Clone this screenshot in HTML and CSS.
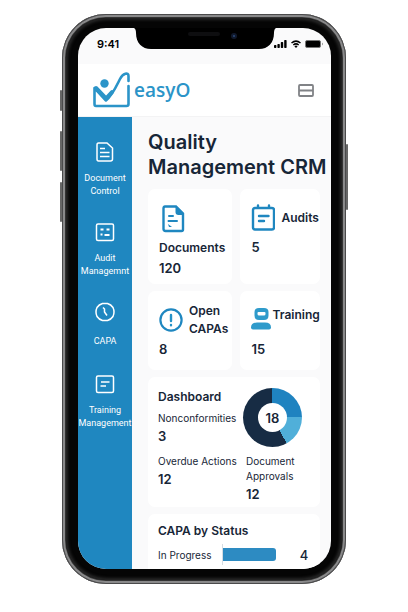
FILE: index.html
```html
<!DOCTYPE html>
<html lang="en">
<head>
<meta charset="utf-8">
<meta name="viewport" content="width=device-width, initial-scale=1">
<title>easyO Quality Management CRM</title>
<link rel="stylesheet" href="styles.css">
</head>
<body>
<div class="phone">
  <span class="key key-mute"></span>
  <span class="key key-up"></span>
  <span class="key key-down"></span>
  <span class="key key-power"></span>
  <div class="bezel">
  <div class="screen">
    <div class="notch">
      <svg viewBox="0 0 142 21" width="142" height="21" aria-hidden="true">
        <path d="M0 0H142Q140 1 140 5C140 15 134 21 125 21H17C8 21 2 15 2 5Q2 1 0 0Z" fill="#000"/>
        <rect x="54" y="4" width="32" height="4" rx="2" fill="#0e0e10"/>
        <circle cx="100" cy="8" r="3" fill="#10192c"/>
        <circle cx="100" cy="8" r="1" fill="#2b4a78"/>
      </svg>
    </div>
    <div class="status">
      <span class="time">9:41</span>
      <svg viewBox="0 0 50 10" width="50" height="10" aria-hidden="true">
        <g fill="#000"><rect x="0" y="6" width="2.400" height="3" rx=".7"/><rect x="3.400" y="5" width="2.400" height="4" rx=".7"/><rect x="6.800" y="3" width="2.400" height="6" rx=".7"/><rect x="10.200" y="1" width="2.400" height="8" rx=".7"/></g>
        <path d="M17.500 4Q22 .2 26.500 4M19.300 6Q22 3.700 24.700 6" fill="none" stroke="#000" stroke-width="1.500"/>
        <path d="M20.400 7.200Q22 6 23.600 7.200L22 9Z"/>
        <rect x="31.500" y="1.500" width="15" height="7" rx="1.500" fill="#000" stroke="#777" stroke-width="1"/>
        <path d="M48 3.500Q49.500 5 48 6.500Z" fill="#555"/>
      </svg>
    </div>
    <header class="topbar">
      <a class="brand" href="#">
        <svg viewBox="0 0 40 38" width="40" height="38" aria-hidden="true">
          <g fill="none" stroke="#2b94c8" stroke-width="2.600" stroke-linejoin="round" stroke-linecap="round">
            <path d="M36.500 15V33Q36.500 35 34.500 35H4Q2.500 35 2.500 33V17L14 29.500C20 25 24 16 28 8C31 2 36.500 1 36.500 5V10"/>
            <path d="M4 17L14 27.500L20 21" stroke-width="4"/>
          </g>
          <circle cx="12.500" cy="12.500" r="4.200" fill="#2b94c8"/>
        </svg>
        <span>easyO</span>
      </a>
      <button class="menu" type="button" aria-label="Menu">
        <svg viewBox="0 0 16 13" width="16" height="13" aria-hidden="true"><path d="M2 1H14Q15 1 15 2V11Q15 12 14 12H2Q1 12 1 11V2Q1 1 2 1ZM1 6.500H15" fill="none" stroke="#808286" stroke-width="1.800"/></svg>
      </button>
    </header>
    <div class="body">
      <nav class="side">
        <a href="#">
          <svg viewBox="0 0 20 20" width="20" height="20" aria-hidden="true"><path d="M3.500 1H12L17.500 6V17Q17.500 19 15.500 19H3.500Q2 19 2 17V3Q2 1 3.500 1ZM5 6.500H10M5 10.500H14.500M5 14.500H14.500"/></svg>
          <span>Document Control</span>
        </a>
        <a href="#">
          <svg viewBox="0 0 20 20" width="20" height="20" aria-hidden="true"><path d="M3 2H17Q18.500 2 18.500 3.500V17Q18.500 18.500 17 18.500H3Q1.500 18.500 1.500 17V3.500Q1.500 2 3 2Z"/><path d="M5.500 7.500H8.500M11.500 7.500H14.500M5.500 12.500H7.500M9.500 13H14.500" stroke-width="2"/></svg>
          <span>Audit Managemnt</span>
        </a>
        <a href="#">
          <svg viewBox="0 0 20 20" width="20" height="20" aria-hidden="true"><path d="M7.500 1.500H12.500Q16 2.500 18 5.500Q20 10 18 14.500Q16 17.500 12.500 18.500H7.500Q4 17.500 2 14.500Q0 10 2 5.500Q4 2.500 7.500 1.500Z"/><path d="M8 5.500L9.500 7V10L12 13.500"/></svg>
          <span>CAPA</span>
        </a>
        <a href="#">
          <svg viewBox="0 0 20 20" width="20" height="20" aria-hidden="true"><path d="M3 2H17Q18.500 2 18.500 3.500V17Q18.500 18.500 17 18.500H3Q1.500 18.500 1.500 17V3.500Q1.500 2 3 2Z"/><path d="M6 8H14.500M5.500 12H11"/></svg>
          <span>Training Management</span>
        </a>
      </nav>
      <main class="main">
        <h1>Quality<br>Management CRM</h1>
        <div class="tiles">
          <section class="tile tile-stacked">
            <svg viewBox="0 0 28 28" width="28" height="28" aria-hidden="true"><path d="M6 1.500H17L24 8.500V24.500Q24 26 22.500 26H6.500Q4.500 26 4.500 24V3.500Q4.500 1.500 6 1.500Z" fill="none" stroke="#1f87c0" stroke-width="2.400"/><path d="M16.500 1V7Q16.500 10 19.500 10H25Z" fill="#1f87c0"/><path d="M10 11H14M9.500 16H18" stroke="#1f87c0" stroke-width="2" stroke-linecap="round"/><path d="M9 19L13 22H10Z" fill="#1f87c0"/></svg>
            <h2>Documents</h2>
            <p>120</p>
          </section>
          <section class="tile">
            <div class="head">
              <svg viewBox="0 0 24 28" width="24" height="28" aria-hidden="true"><path d="M4 4H21Q23 4 23 6V23.500Q23 25.500 21 25.500H4Q2 25.500 2 23.500V6Q2 4 4 4ZM7 1.500V4M18 1.500V4M8 12H17.500M8 17H13" fill="none" stroke="#1f87c0" stroke-width="2.400" stroke-linecap="round"/></svg>
              <h2>Audits</h2>
            </div>
            <p>5</p>
          </section>
          <section class="tile">
            <div class="head">
              <svg viewBox="0 0 24 24" width="24" height="24" aria-hidden="true"><circle cx="12" cy="12" r="10.600" fill="none" stroke="#1f87c0" stroke-width="2.200"/><path d="M12 7V13M12 17V17.300" stroke="#2492c8" stroke-width="2.400" stroke-linecap="round"/></svg>
              <h2>Open<br>CAPAs</h2>
            </div>
            <p>8</p>
          </section>
          <section class="tile">
            <div class="head head-tight">
              <svg viewBox="0 0 20 24" width="20" height="24" aria-hidden="true"><path d="M8 2H13Q17.500 2 17.500 6V9.500Q17.500 14 13 14H8Q3.500 14 3.500 9.500V6Q3.500 2 8 2ZM7.500 6Q6.500 6 6.500 7V8Q6.500 9.500 8 9.500H13Q14.500 9.500 14.500 8V7Q14.500 6 13.500 6Z" fill="#2f9bcb" fill-rule="evenodd"/><path d="M6 16.500H14Q20 16.500 20 21.500Q20 23.500 18 23.500H2Q0 23.500 0 21.500Q0 16.500 6 16.500Z" fill="#2f9bcb"/></svg>
              <h2>Training</h2>
            </div>
            <p>15</p>
          </section>
        </div>
        <section class="panel dashboard">
          <div>
            <h2>Dashboard</h2>
            <dl><dt>Nonconformities</dt><dd>3</dd></dl>
            <dl><dt>Overdue Actions</dt><dd>12</dd></dl>
          </div>
          <div class="approvals">
            <div class="donut"><span>18</span></div>
            <dl><dt>Document<br>Approvals</dt><dd>12</dd></dl>
          </div>
        </section>
        <section class="panel chart">
          <h2>CAPA by Status</h2>
          <div class="row">
            <span class="label">In Progress</span>
            <span class="track"><span class="bar" style="width:70%"></span></span>
            <span class="value">4</span>
          </div>
        </section>
      </main>
    </div>
  </div>
  </div>
</div>
</body>
</html>
```
FILE: styles.css
```css
* { box-sizing: border-box; }
body { margin: 0; background: #fff; color: #172637; font-family: Inter, "Liberation Sans", sans-serif; }
h1, h2, p, dl, dd { margin: 0; }
a { color: inherit; text-decoration: none; }
svg { flex: none; display: block; }

.phone {
  position: relative;
  width: calc(100% - 124px);
  max-width: 420px;
  margin: 14px auto 28px;
  padding: 4px;
  border-radius: 44px;
  background: #333;
  box-shadow: inset 0 0 0 1px #4a4a4b, inset 0 0 0 3px #89898a;
}
.bezel { padding: 10px 11px 11px 12px; border-radius: 40px; background: #050505; box-shadow: inset 0 0 3px 2px #272727; }
.key { position: absolute; width: 2px; border-radius: 2px; background: #666; left: -2px; }
.key-mute { top: 76px; height: 21px; }
.key-up { top: 117px; height: 40px; }
.key-down { top: 168px; height: 40px; }
.key-power { top: 130px; height: 66px; left: auto; right: -2px; }

.screen { position: relative; height: calc(100vh - 71px); min-height: 480px; overflow: hidden; border-radius: 28px; background: #fafafb; display: flex; flex-direction: column; }
.notch { position: absolute; top: 0; left: 0; right: 0; display: flex; justify-content: center; }
.status { flex: none; display: flex; justify-content: space-between; align-items: center; height: 36px; padding: 0 7px 4px 19px; }
.time { font-size: 11px; font-weight: 600; color: #000; }
.topbar { flex: none; display: flex; justify-content: space-between; align-items: center; height: 53px; padding: 0 17px 0 14px; background: #fff; border-bottom: 1px solid #f3f3f4; }
.brand { display: flex; align-items: center; gap: 2px; color: #2b94c8; font-family: "Open Sans", sans-serif; font-size: 19px; font-weight: 600; line-height: 24px; }
.menu { padding: 0; border: 0; background: none; }

.body { display: flex; flex: 1; min-height: 0; }
.side { flex: none; width: 54px; background: #1f87c0; color: #fff; padding-top: 25px; display: flex; flex-direction: column; gap: 24px; font-family: Roboto, sans-serif; }
.side a { display: flex; flex-direction: column; align-items: center; gap: 10px; font-size: 9px; line-height: 13px; text-align: center; }
.side span { display: grid; align-items: center; min-height: 18px; }
.side svg { fill: none; stroke: #fff; stroke-width: 1.5; }

.main { flex: 1; min-width: 0; padding: 13px 11px 0 16px; display: flex; flex-direction: column; gap: 7px; }
.main > * { flex: none; }
h1 { margin-bottom: 2px; font-size: 20px; line-height: 25px; font-weight: 600; white-space: nowrap; }
h2 { font-size: 12px; line-height: 18px; font-weight: 600; }
.tiles { display: grid; grid-template-columns: minmax(0, 85fr) minmax(0, 80fr); gap: 7px 8px; }
.tile, .panel { background: #fff; border-radius: 7px; }
.tile { padding: 11px 3px 10px 11px; }
.head { display: flex; align-items: center; gap: 6px; min-height: 36px; }
.head-tight { gap: 1px; align-items: flex-start; padding-top: 4px; }
.tile p { font-size: 13px; line-height: 22px; font-weight: 600; }
.tile-stacked { padding-top: 16px; padding-bottom: 5px; }
.tile-stacked h2 { margin-top: 6px; }
.panel { padding: 11px 10px 3px; }
.dashboard { display: grid; grid-template-columns: 80px 1fr; gap: 5px; }
.dashboard h2 { margin-bottom: 5px; }
dl { font-size: 10px; line-height: 15px; }
dl + dl { margin-top: 8px; }
dt { white-space: nowrap; }
dd { font-size: 13px; line-height: 20px; font-weight: 600; }
.approvals dl { margin-top: 7px; padding-left: 3px; }
.donut { display: grid; place-items: center; width: 59px; height: 59px; border-radius: 50%; background: conic-gradient(#1f83c0 0 25%, #50afd9 25% 42%, #172c44 42%); }
.donut span { display: grid; place-items: center; width: 29px; height: 29px; border-radius: 50%; background: #fff; font-size: 13px; font-weight: 600; }
.chart { padding-top: 8px; padding-bottom: 20px; }
.row { display: flex; align-items: center; margin-top: 4px; height: 21px; font-size: 10px; }
.label { width: 64px; }
.track { flex: 1; align-self: stretch; display: flex; align-items: center; border-left: 1px solid #d5dce2; }
.bar { height: 13px; border-radius: 0 3px 3px 0; background: #2d8bc2; }
.value { width: 12px; text-align: center; font-size: 13px; font-weight: 500; }
```
